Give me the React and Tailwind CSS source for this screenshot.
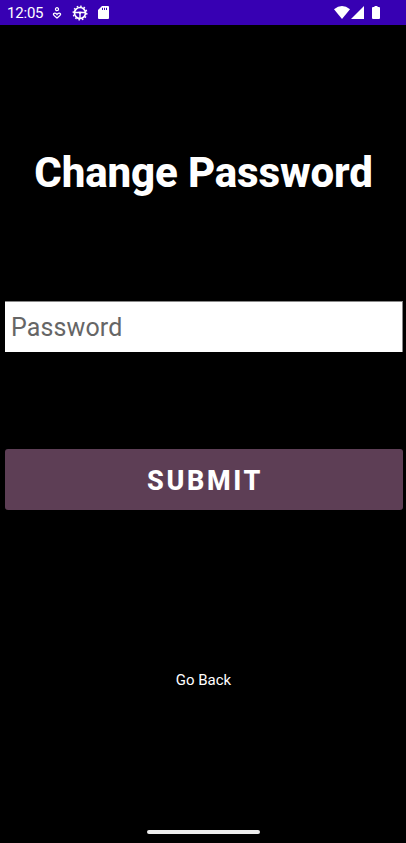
function StatusBar() {
  return (
    <header className="flex h-[25px] shrink-0 items-center bg-[#3700b3] pl-[7px] text-white">
      <span className="w-[37px] whitespace-nowrap pt-[2px] text-[15px] leading-[25px] tracking-[-0.2px]">12:05</span>
      <svg className="ml-[8px]" width="10" height="12" viewBox="0 0 10 12" fill="none" stroke="currentColor" strokeWidth="1.3">
        <circle cx="5" cy="2.2" r="1.5" />
        <path d="M5 7.500C4 5.700 1.600 5.600 1.400 7.200C1.400 8.600 3.500 9.800 5 11C6.500 9.800 8.600 8.600 8.600 7.200C8.400 5.600 6 5.700 5 7.500Z" />
      </svg>
      <svg className="ml-[10px]" width="16" height="16" viewBox="0 0 16 16" fill="none" stroke="currentColor">
        <circle cx="8" cy="8" r="5.5" strokeWidth="1.7" />
        <circle cx="8" cy="8" r="6.8" strokeWidth="1.4" strokeDasharray="1.600 1.960" />
        <path d="M3 7.500H13M8 8V13" strokeWidth="1.400" />
        <path d="M6.500 7H9.500L8 9Z" fill="currentColor" strokeWidth="0.600" />
      </svg>
      <svg className="ml-[10px]" width="11" height="13" viewBox="0 0 11 13">
        <path d="M4 0H10Q11 0 11 1V12Q11 13 10 13H1Q0 13 0 12V4Z" fill="currentColor" />
        <path d="M4.500 1.800V4M6.500 1.800V4M8.500 1.800V4" stroke="#3700b3" strokeWidth="1" />
      </svg>
      <svg className="ml-auto" width="16" height="13" viewBox="0 0 16 13" fill="currentColor">
        <path d="M0 3.300Q8 -3.300 16 3.300L8 13Z" />
      </svg>
      <svg className="ml-px" width="13" height="13" viewBox="0 0 13 13" fill="currentColor">
        <path d="M13 0V13H0Z" />
      </svg>
      <svg className="mr-[26px] ml-[8px]" width="8" height="13" viewBox="0 0 8 13" fill="currentColor">
        <path d="M2.500 0H5.500V1H7Q8 1 8 2V12Q8 13 7 13H1Q0 13 0 12V2Q0 1 1 1H2.500Z" />
      </svg>
    </header>
  );
}

export default function App() {
  return (
    <div className="flex h-[843px] w-[406px] flex-col overflow-hidden bg-black font-[Roboto,sans-serif] text-white">
      <StatusBar />
      <main className="flex flex-1 flex-col pr-[3px] pl-[5px]">
        <h1 className="mt-[123px] h-[50px] pr-[1px] text-center text-[42px] leading-[50px] font-extrabold tracking-[-0.12px] whitespace-nowrap">
          Change Password
        </h1>
        <input
          type="text"
          placeholder="Password"
          aria-label="Password"
          className="mt-[103px] h-[51px] w-full border-t border-r border-[#888] bg-white px-[6px] text-[25px] tracking-[0.12px] text-black outline-none placeholder:text-[#666]"
        />
        <button className="mt-[97px] h-[61px] w-full rounded-[3px] bg-[#5d3e55] pt-[3px] pl-[2px] text-[27px] font-extrabold tracking-[2.6px]">
          SUBMIT
        </button>
        <button className="mt-[160px] mr-[1px] h-[20px] self-center text-[15px] leading-[20px]">Go Back</button>
      </main>
      <footer className="flex h-[13px] shrink-0 justify-center">
        <div className="h-[4px] w-[113px] rounded-full bg-[#eee]" />
      </footer>
    </div>
  );
}
